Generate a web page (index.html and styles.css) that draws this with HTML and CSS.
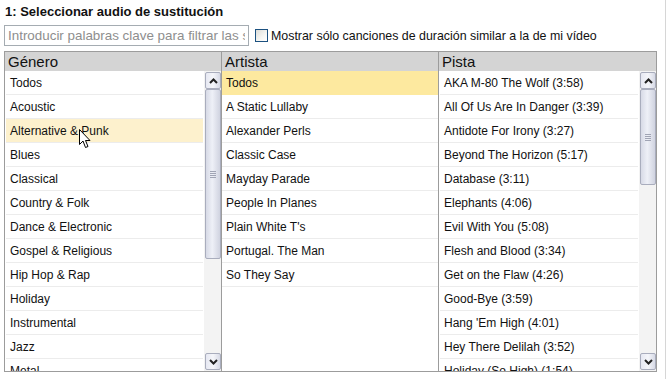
FILE: index.html
```html
<!DOCTYPE html>
<html lang="es">
<head>
    <meta charset="UTF-8">
    <title>Seleccionar audio de sustitución</title>
    <link rel="stylesheet" href="styles.css">
</head>
<body>
    <div class="page">
        <h1 class="step-title">1: Seleccionar audio de sustitución</h1>
        <div class="filter-bar">
            <input class="keyword-input" type="text" placeholder="Introducir palabras clave para filtrar las sugerencias">
            <label class="similar-check"><span class="checkbox"></span>Mostrar sólo canciones de duración similar a la de mi vídeo</label>
        </div>

        <div class="browser">
            <!-- genre column -->
            <div class="column genre-col">
                <div class="col-header">Género</div>
                <div class="col-body">
                    <ul class="item-list">
                        <li>Todos</li>
                        <li>Acoustic</li>
                        <li class="hover">Alternative &amp; Punk</li>
                        <li>Blues</li>
                        <li>Classical</li>
                        <li>Country &amp; Folk</li>
                        <li>Dance &amp; Electronic</li>
                        <li>Gospel &amp; Religious</li>
                        <li>Hip Hop &amp; Rap</li>
                        <li>Holiday</li>
                        <li>Instrumental</li>
                        <li>Jazz</li>
                        <li>Metal</li>
                    </ul>
                    <div class="scrollbar">
                        <div class="sb-btn sb-up"><svg width="9" height="6" viewBox="0 0 9 6"><path d="M1 5 L4.5 1.5 L8 5" fill="none" stroke="#222" stroke-width="2"/></svg></div>
                        <div class="sb-track">
                            <div class="sb-thumb genre-thumb"><span class="grip"></span></div>
                        </div>
                        <div class="sb-btn sb-down"><svg width="9" height="6" viewBox="0 0 9 6"><path d="M1 1 L4.5 4.5 L8 1" fill="none" stroke="#222" stroke-width="2"/></svg></div>
                    </div>
                </div>
            </div>

            <!-- artist column -->
            <div class="column artist-col">
                <div class="col-header">Artista</div>
                <div class="col-body">
                    <ul class="item-list">
                        <li class="selected">Todos</li>
                        <li>A Static Lullaby</li>
                        <li>Alexander Perls</li>
                        <li>Classic Case</li>
                        <li>Mayday Parade</li>
                        <li>People In Planes</li>
                        <li>Plain White T's</li>
                        <li>Portugal. The Man</li>
                        <li>So They Say</li>
                    </ul>
                </div>
            </div>

            <!-- track column -->
            <div class="column track-col">
                <div class="col-header">Pista</div>
                <div class="col-body">
                    <ul class="item-list">
                        <li>AKA M-80 The Wolf (3:58)</li>
                        <li>All Of Us Are In Danger (3:39)</li>
                        <li>Antidote For Irony (3:27)</li>
                        <li>Beyond The Horizon (5:17)</li>
                        <li>Database (3:11)</li>
                        <li>Elephants (4:06)</li>
                        <li>Evil With You (5:08)</li>
                        <li>Flesh and Blood (3:34)</li>
                        <li>Get on the Flaw (4:26)</li>
                        <li>Good-Bye (3:59)</li>
                        <li>Hang 'Em High (4:01)</li>
                        <li>Hey There Delilah (3:52)</li>
                        <li>Holiday (So High) (1:54)</li>
                    </ul>
                    <div class="scrollbar">
                        <div class="sb-btn sb-up"><svg width="9" height="6" viewBox="0 0 9 6"><path d="M1 5 L4.5 1.5 L8 5" fill="none" stroke="#222" stroke-width="2"/></svg></div>
                        <div class="sb-track">
                            <div class="sb-thumb track-thumb"><span class="grip"></span></div>
                        </div>
                        <div class="sb-btn sb-down"><svg width="9" height="6" viewBox="0 0 9 6"><path d="M1 1 L4.5 4.5 L8 1" fill="none" stroke="#222" stroke-width="2"/></svg></div>
                    </div>
                </div>
            </div>
        </div>

        <!-- mouse pointer over the hovered genre -->
        <svg class="pointer" width="12" height="20" viewBox="0 0 12 20">
            <path d="M0.5 0.5 L0.5 15.5 L4 12 L6.5 18.5 L9 17.5 L6.5 11.5 L11 11.5 Z" fill="#fff" stroke="#000" stroke-width="1" stroke-linejoin="miter"/>
        </svg>
    </div>
</body>
</html>
```

FILE: styles.css
```css
body {
    margin: 0;
    padding: 0;
    background-color: #ffffff;
    font-family: "Liberation Sans", Arial, sans-serif;
    color: #000;
}
.page {
    position: relative;
    width: 666px;
    height: 379px;
    border-right: 1px solid #d6d6d6;
    box-sizing: border-box;
    padding: 3px 0 0 4px;
}
.step-title {
    margin: 0 0 5px 1px;
    font-size: 13px;
    line-height: 17px;
    font-weight: bold;
    color: #111;
}
.filter-bar {
    display: flex;
    align-items: center;
    height: 21px;
}
.keyword-input {
    width: 245px;
    height: 21px;
    box-sizing: border-box;
    margin: 0;
    padding: 0 3px;
    border: 1px solid #a5acb2;
    font-family: "Liberation Sans", Arial, sans-serif;
    font-size: 13.4px;
    color: #000;
}
.keyword-input::placeholder {
    color: #8e8e8e;
}
.similar-check {
    display: flex;
    align-items: center;
    margin-left: 6px;
    font-size: 12.4px;
    color: #111;
}
.checkbox {
    width: 11px;
    height: 11px;
    margin-right: 3px;
    border: 1px solid #1c5180;
    background: linear-gradient(135deg, #dcdcd7 0%, #f6f6f3 60%, #ffffff 100%);
}
.browser {
    display: flex;
    width: 653px;
    height: 321px;
    margin-top: 5px;
    border: 1px solid #9c9c9c;
    box-sizing: border-box;
}
.column {
    display: flex;
    flex-direction: column;
    min-width: 0;
}
.genre-col {
    width: 216px;
    border-right: 1px solid #9c9c9c;
}
.artist-col {
    width: 216px;
    border-right: 1px solid #9c9c9c;
}
.track-col {
    flex: 1;
}
.col-header {
    height: 19px;
    line-height: 19px;
    padding-left: 3px;
    background-color: #d4d4d4;
    font-size: 15px;
    color: #111;
}
.col-body {
    flex: 1;
    display: flex;
    min-height: 0;
}
.item-list {
    flex: 1;
    list-style: none;
    margin: 0;
    padding: 0 1px;
    overflow: hidden;
}
.item-list li {
    height: 23px;
    line-height: 24px;
    padding-left: 4px;
    border-bottom: 1px solid #ececec;
    font-size: 12px;
    white-space: nowrap;
    color: #111;
}
.item-list li.hover {
    background-color: #fdf1cd;
}
.item-list li.selected {
    background-color: #fde99f;
    border-bottom-color: #fde99f;
}
.artist-col .item-list {
    padding: 0;
}
.scrollbar {
    width: 17px;
    display: flex;
    flex-direction: column;
    background-color: #f3f3f3;
    padding: 1px 0 1px 1px;
    box-sizing: border-box;
}
.sb-btn {
    height: 15px;
    display: flex;
    align-items: center;
    justify-content: center;
    border: 1px solid #a9adbd;
    border-radius: 2px;
    background: linear-gradient(90deg, #e6e8f2 0%, #f5f6fa 50%, #d7dae6 100%);
}
.sb-track {
    flex: 1;
    display: flex;
    flex-direction: column;
}
.sb-thumb {
    display: flex;
    align-items: center;
    justify-content: center;
    border: 1px solid #a9adbd;
    border-radius: 2px;
    background: linear-gradient(90deg, #d7dae6 0%, #eef0f7 45%, #d0d3e0 100%);
}
.genre-thumb {
    height: 168px;
}
.track-thumb {
    height: 94px;
}
.grip {
    width: 6px;
    height: 7px;
    background: repeating-linear-gradient(180deg, #a0a4b4 0px, #a0a4b4 1px, transparent 1px, transparent 2px);
}
.pointer {
    position: absolute;
    left: 79px;
    top: 129px;
}
```
